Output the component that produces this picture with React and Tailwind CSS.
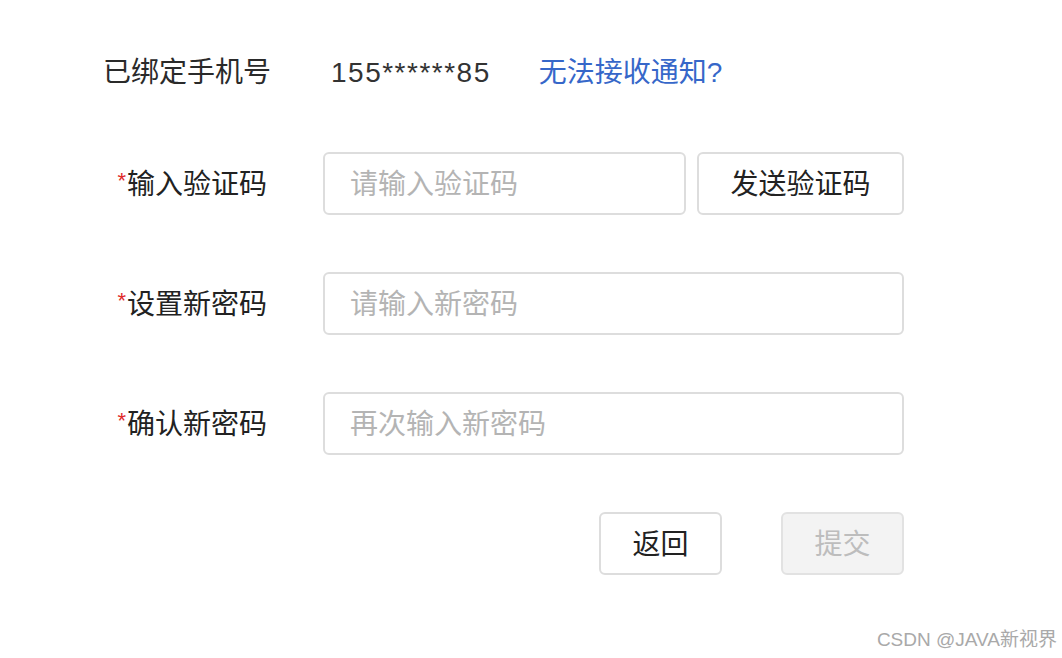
import React from "react";

const font = { fontFamily: '"Liberation Sans", "Noto Sans CJK SC", sans-serif' };

function Label({ children, required }) {
  return (
    <div className="w-[267px] shrink-0 pt-[3px] text-right text-[28px] text-[#222]">
      {required && <span className="relative -top-[6px] mr-[1px] text-[22px] text-[#e02b2b]">*</span>}
      {children}
    </div>
  );
}

function Input({ placeholder, className = "" }) {
  return (
    <input
      className={`h-[63px] rounded-[6px] border-2 border-[#dddddd] bg-white px-[25px] pt-[3px] text-[28px] text-[#333] placeholder:text-[#b4b4b4] outline-none ${className}`}
      placeholder={placeholder}
      style={font}
    />
  );
}

export default function App() {
  return (
    <div className="relative h-[658px] w-[1062px] overflow-hidden bg-white" style={font}>
      <form className="flex flex-col pt-[40px]" onSubmit={(e) => e.preventDefault()}>
        <div className="flex h-[63px] items-center pt-[2px]">
          <div className="w-[271px] shrink-0 text-right text-[28px] text-[#2a2a2a]">已绑定手机号</div>
          <div className="ml-[60px] text-[28px] tracking-[1.5px] text-[#333]">155******85</div>
          <a className="ml-[48px] cursor-pointer text-[28px] text-[#3667c9]">无法接收通知?</a>
        </div>

        <div className="mt-[49px] flex h-[63px] items-center">
          <Label required>输入验证码</Label>
          <Input placeholder="请输入验证码" className="ml-[56px] w-[363px]" />
          <button
            type="button"
            className="ml-[11px] h-[63px] w-[207px] rounded-[6px] border-2 border-[#dddddd] bg-white pt-[3px] text-[28px] text-[#222]"
          >
            发送验证码
          </button>
        </div>

        <div className="mt-[57px] flex h-[63px] items-center">
          <Label required>设置新密码</Label>
          <Input placeholder="请输入新密码" className="ml-[56px] w-[581px]" />
        </div>

        <div className="mt-[57px] flex h-[63px] items-center">
          <Label required>确认新密码</Label>
          <Input placeholder="再次输入新密码" className="ml-[56px] w-[581px]" />
        </div>

        <div className="mt-[57px] flex h-[63px] items-center pl-[599px]">
          <button
            type="button"
            className="h-[63px] w-[123px] rounded-[6px] border-2 border-[#dddddd] bg-white pt-[3px] text-[28px] text-[#222]"
          >
            返回
          </button>
          <button
            type="submit"
            disabled
            className="ml-[59px] h-[63px] w-[123px] rounded-[6px] border-2 border-[#e2e2e2] bg-[#f3f3f3] pt-[3px] text-[28px] text-[#bdbdbd]"
          >
            提交
          </button>
        </div>
      </form>

      <div className="absolute bottom-[4px] right-[5px] text-[19px] text-[#a9a9a9]">CSDN @JAVA新视界</div>
    </div>
  );
}
